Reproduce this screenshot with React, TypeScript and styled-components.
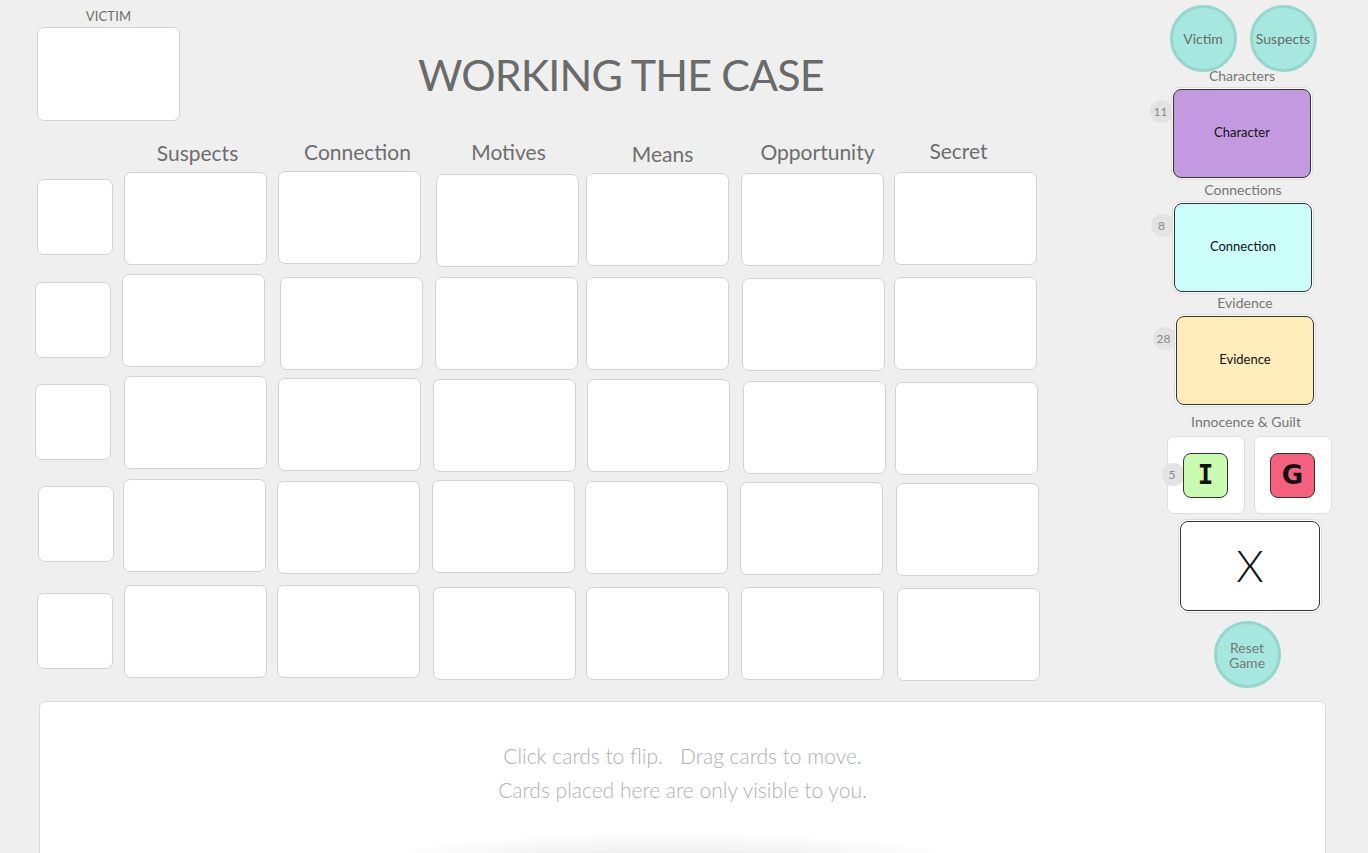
import React from "react";
import styled, { createGlobalStyle } from "styled-components";

const Global = createGlobalStyle`
  html, body {
    margin: 0;
    padding: 0;
    background: #efefef;
    overflow: hidden;
    font-family: "Lato", "Open Sans", sans-serif;
  }
  * { box-sizing: border-box; }
`;

const Page = styled.div`
  display: grid;
  grid-template-columns: 1118px 250px;
  grid-template-rows: 701px auto;
  width: 1368px;
  height: 853px;
  overflow: hidden;
`;

const Board = styled.main`
  display: flex;
  flex-direction: column;
`;

const TopRow = styled.div`
  display: flex;
  align-items: flex-start;
  height: 141px;
`;

const VictimSlot = styled.div`
  margin: 9px 0 0 37px;
  display: flex;
  flex-direction: column;
  align-items: center;
  gap: 4px;
`;

const SlotLabel = styled.div`
  font-size: 13px;
  line-height: 14px;
  color: #6e6e6e;
  letter-spacing: 0.2px;
`;

const Title = styled.h1`
  margin: 53px 0 0 238px;
  font-size: 43px;
  line-height: 1;
  font-weight: 400;
  letter-spacing: -0.9px;
  color: #6a6a6a;
  white-space: nowrap;
`;

const columns = "87px 155px 156px 152px 155px 154px 146px";

const HeaderRow = styled.div`
  display: grid;
  grid-template-columns: ${columns};
  padding-left: 36px;
  height: 31px;
`;

const ColumnLabel = styled.div<{ $col: number }>`
  grid-column: ${(p) => p.$col + 1};
  width: 143px;
  text-align: center;
  font-size: 21px;
  line-height: 24px;
  color: #6e6e6e;
  white-space: nowrap;
`;

const CardGrid = styled.div`
  display: grid;
  grid-template-columns: ${columns};
  grid-auto-rows: 103px;
  padding-left: 36px;
`;

const Slot = styled.div<{ $small?: boolean }>`
  width: ${(p) => (p.$small ? 76 : 143)}px;
  height: ${(p) => (p.$small ? 76 : 93)}px;
  background: #fff;
  border: 1px solid #d2d2d2;
  border-radius: 7px;
`;

const VictimCard = styled(Slot)`
  width: 143px;
  height: 94px;
`;

const Side = styled.aside`
  display: flex;
  flex-direction: column;
  align-items: center;
  & > * { flex-shrink: 0; }
`;

const CircleRow = styled.div`
  display: flex;
  gap: 13px;
  margin-top: 5px;
`;

const RoundButton = styled.button`
  width: 67px;
  height: 67px;
  border-radius: 50%;
  border: 3px solid #95d6cd;
  background: #a6e8df;
  color: #6a6a6a;
  font-family: "Lato", sans-serif;
  font-size: 14px;
  line-height: 15px;
  padding: 0;
  display: flex;
  align-items: center;
  justify-content: center;
  text-align: center;
`;

const SideLabel = styled.div<{ $mt: number }>`
  margin-top: ${(p) => p.$mt}px;
  font-size: 14px;
  line-height: 14px;
  color: #767676;
  white-space: nowrap;
`;

const Deck = styled.div<{ $mt: number }>`
  position: relative;
  margin-top: ${(p) => p.$mt}px;
`;

const Badge = styled.div`
  position: absolute;
  width: 23px;
  height: 23px;
  border-radius: 50%;
  background: #e3e3e3;
  color: #888;
  font-size: 12px;
  display: flex;
  align-items: center;
  justify-content: center;
  padding-right: 2px;
`;

const Frame = styled.div<{ $w: number; $h: number }>`
  position: relative;
  width: ${(p) => p.$w}px;
  height: ${(p) => p.$h}px;
  padding: 1px;
  background: #fff;
  border: 1px solid #dcdcdc;
  border-radius: 9px;
  display: flex;
`;

const DeckCard = styled.div<{ $bg: string }>`
  flex: 1;
  border: 1px solid #333;
  border-radius: 8px;
  background: ${(p) => p.$bg};
  display: flex;
  align-items: center;
  justify-content: center;
  padding-bottom: 4px;
  color: #111;
  font-size: 13px;
`;

const BigX = styled.span`
  font-size: 44px;
  font-weight: 300;
  color: #111;
  line-height: 1;
  margin-top: 2px;
`;

const HolderRow = styled.div`
  display: flex;
  gap: 9px;
  margin-top: 7px;
`;

const Holder = styled.div`
  position: relative;
  width: 78px;
  height: 78px;
  background: #fff;
  border: 1px solid #dedede;
  border-radius: 7px;
  display: flex;
  align-items: center;
  justify-content: center;
`;

const Tile = styled.div<{ $bg: string; $mono?: boolean }>`
  position: relative;
  width: 45px;
  height: 45px;
  border: 1px solid #333;
  border-radius: 8px;
  background: ${(p) => p.$bg};
  display: flex;
  align-items: center;
  justify-content: center;
  font-family: ${(p) => (p.$mono ? '"DejaVu Sans Mono", monospace' : '"DejaVu Sans", sans-serif')};
  font-weight: 700;
  font-size: 26px;
  color: #111;
`;

const ResetButton = styled(RoundButton)`
  margin-top: 8px;
  color: #777;
`;

const Hand = styled.section`
  grid-column: 1 / span 2;
  position: relative;
  margin-left: 39px;
  width: 1287px;
  height: 170px;
  background: #fff;
  border: 1px solid #dadada;
  border-radius: 6px;
  padding-top: 37px;
  text-align: center;
  color: #b0b0b0;
  font-size: 21px;
  font-weight: 300;
  line-height: 34px;
  overflow: hidden;
  &::after {
    content: "";
    position: absolute;
    left: 300px;
    width: 660px;
    top: 128px;
    height: 60px;
    background: radial-gradient(ellipse at center, rgba(0, 0, 0, 0.09) 0%, rgba(0, 0, 0, 0) 65%);
  }
`;

const headers = [
  { t: "Suspects", dx: 3, dy: 0 },
  { t: "Connection", dx: 8, dy: -1 },
  { t: "Motives", dx: 3, dy: -1 },
  { t: "Means", dx: 5, dy: 1 },
  { t: "Opportunity", dx: 5, dy: -1 },
  { t: "Secret", dx: -8, dy: -2 },
];

const smallOffsets: [number, number][] = [
  [1, 7],
  [-1, 7],
  [-1, 6],
  [2, 5],
  [1, 9],
];

const cardOffsets: [number, number][][] = [
  [[1, 0], [0, -1], [2, 2], [0, 1], [0, 1], [-1, 0]],
  [[-1, -1], [2, 2], [1, 2], [0, 2], [1, 3], [-1, 2]],
  [[1, -2], [0, 0], [-1, 1], [1, 1], [2, 3], [0, 4]],
  [[0, -2], [-1, 0], [-2, -1], [-1, 0], [-1, 1], [1, 2]],
  [[1, 1], [-1, 1], [-1, 3], [0, 3], [0, 3], [2, 4]],
];

const shift = (dx: number, dy: number) => ({ transform: `translate(${dx}px, ${dy}px)` });

const decks = [
  { label: "Characters", lmt: -3, mt: 4, name: "Character", count: "11", bg: "#c39ae0", dx: -1 },
  { label: "Connections", lmt: 3, mt: 4, name: "Connection", count: "8", bg: "#cbfdf9", dx: 0 },
  { label: "Evidence", lmt: 2, mt: 4, name: "Evidence", count: "28", bg: "#feecba", dx: 2 },
];

export default function App() {
  return (
    <>
      <Global />
      <Page>
        <Board>
          <TopRow>
            <VictimSlot>
              <SlotLabel>VICTIM</SlotLabel>
              <VictimCard />
            </VictimSlot>
            <Title>WORKING THE CASE</Title>
          </TopRow>
          <HeaderRow>
            {headers.map((h, i) => (
              <ColumnLabel key={h.t} $col={i + 1} style={shift(h.dx, h.dy)}>
                {h.t}
              </ColumnLabel>
            ))}
          </HeaderRow>
          <CardGrid>
            {cardOffsets.map((row, r) => (
              <React.Fragment key={r}>
                <Slot $small style={shift(...smallOffsets[r])} />
                {row.map((o, c) => (
                  <Slot key={c} style={shift(o[0], o[1])} />
                ))}
              </React.Fragment>
            ))}
          </CardGrid>
        </Board>

        <Side>
          <CircleRow>
            <RoundButton>Victim</RoundButton>
            <RoundButton>Suspects</RoundButton>
          </CircleRow>
          {decks.map((d) => (
            <React.Fragment key={d.name}>
              <SideLabel $mt={d.lmt} style={shift(d.dx, 0)}>
                {d.label}
              </SideLabel>
              <Deck $mt={d.mt} style={shift(d.dx, 0)}>
                <Badge style={{ left: -21, top: 13 }}>{d.count}</Badge>
                <Frame $w={142} $h={93}>
                  <DeckCard $bg={d.bg}>{d.name}</DeckCard>
                </Frame>
              </Deck>
            </React.Fragment>
          ))}
          <SideLabel $mt={8} style={shift(3, 0)}>
            Innocence &amp; Guilt
          </SideLabel>
          <HolderRow style={shift(6, 0)}>
            <Holder>
              <Badge style={{ left: -6, top: 26 }}>5</Badge>
              <Tile $bg="#c9fbb1" $mono>
                I
              </Tile>
            </Holder>
            <Holder>
              <Tile $bg="#f5607f">G</Tile>
            </Holder>
          </HolderRow>
          <Deck $mt={5} style={shift(7, 0)}>
            <Frame $w={144} $h={94}>
              <DeckCard $bg="#fff">
                <BigX>X</BigX>
              </DeckCard>
            </Frame>
          </Deck>
          <ResetButton style={shift(4, 0)}>
            Reset
            <br />
            Game
          </ResetButton>
        </Side>

        <Hand>
          Click cards to flip.&nbsp;&nbsp; Drag cards to move.
          <br />
          Cards placed here are only visible to you.
        </Hand>
      </Page>
    </>
  );
}
